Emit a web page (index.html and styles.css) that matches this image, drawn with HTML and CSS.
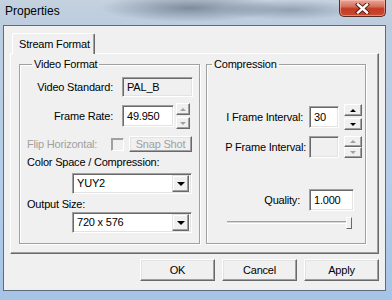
FILE: index.html
```html
<!DOCTYPE html>
<html lang="en">

<head>
     <meta charset="UTF-8">
     <title>Properties</title>
     <link rel="stylesheet" href="styles.css">
</head>

<body>
     <div class="window">
          <div class="titlebar">
               <span class="title">Properties</span>
               <span class="close">
                    <svg width="15" height="11" viewBox="0 0 15 11">
                         <path d="M3 1.5 L12 9.5 M12 1.5 L3 9.5" stroke="#4a1a14" stroke-width="4.2" stroke-linecap="square" />
                         <path d="M3 1.5 L12 9.5 M12 1.5 L3 9.5" stroke="#fff" stroke-width="2.4" stroke-linecap="square" />
                    </svg>
               </span>
          </div>

          <div class="client">
               <div class="tabs">
                    <div class="tab active">Stream Format</div>
               </div>

               <div class="panel">
                    <fieldset class="group video">
                         <legend>Video Format</legend>
                         <div class="row std">
                              <span class="lbl">Video Standard:</span>
                              <span class="field readonly">PAL_B</span>
                         </div>
                         <div class="row rate">
                              <span class="lbl">Frame Rate:</span>
                              <span class="field edit">49.950</span>
                              <span class="spin">
                                   <span class="sbtn up disabled"></span>
                                   <span class="sbtn down disabled"></span>
                              </span>
                         </div>
                         <div class="row flip">
                              <span class="lbl-left off">Flip Horizontal:</span>
                              <span class="check"></span>
                              <span class="btn small off">Snap Shot</span>
                         </div>
                         <div class="caption first">Color Space / Compression:</div>
                         <div class="combo first"><span class="value">YUY2</span><span class="drop"></span></div>
                         <div class="caption">Output Size:</div>
                         <div class="combo"><span class="value">720 x 576</span><span class="drop"></span></div>
                    </fieldset>

                    <fieldset class="group comp">
                         <legend>Compression</legend>
                         <div class="row iframe">
                              <span class="lbl">I Frame Interval:</span>
                              <span class="field edit">30</span>
                              <span class="spin">
                                   <span class="sbtn up"></span>
                                   <span class="sbtn down"></span>
                              </span>
                         </div>
                         <div class="row pframe">
                              <span class="lbl">P Frame Interval:</span>
                              <span class="field readonly"></span>
                              <span class="spin">
                                   <span class="sbtn up disabled"></span>
                                   <span class="sbtn down disabled"></span>
                              </span>
                         </div>
                         <div class="row quality">
                              <span class="lbl">Quality:</span>
                              <span class="field edit">1.000</span>
                         </div>
                         <div class="slider">
                              <span class="track"></span>
                              <span class="thumb"></span>
                         </div>
                    </fieldset>
               </div>

               <div class="buttons">
                    <span class="btn">OK</span>
                    <span class="btn">Cancel</span>
                    <span class="btn">Apply</span>
               </div>
          </div>
     </div>
</body>

</html>
```

FILE: styles.css
```css
:root {
     --FONT-FAMILY: 'Liberation Sans', Arial, sans-serif;
     --FACE-color: #f0f0f0;
     --LIGHT-color: #ffffff;
     --SHADOW-color: #a0a0a0;
     --DARK-color: #696969;
     --DISABLED-color: #a0a0a0;
}

/** Généralités **/
* {
     margin: 0;
     padding: 0;
}

*,
*::before,
*::after {
     box-sizing: border-box;
}

body {
     font-family: var(--FONT-FAMILY);
     font-size: 11px;
     line-height: 13px;
     letter-spacing: -0.2px;
     color: #000;
     background: #a9c6e8;
}

/** fenêtre **/
.window {
     width: 392px;
     height: 300px;
     display: flex;
     flex-direction: column;
     padding: 0 6px 9px 3px;
     background:
          radial-gradient(ellipse 90px 14px at 190px 8px, rgba(70, 85, 105, .55), transparent),
          radial-gradient(ellipse 70px 10px at 290px 10px, rgba(90, 105, 125, .45), transparent),
          linear-gradient(to bottom, #c4d1de 0, #bccddf 25px, #b4cde9 60%, #a6c4e6 100%);
}

.titlebar {
     height: 25px;
     display: flex;
     align-items: flex-start;
     flex-shrink: 0;
}

.title {
     padding: 4px 0 0 2px;
     font-size: 12px;
     line-height: 15px;
     letter-spacing: 0;
     color: #000;
}

.close {
     margin-left: auto;
     width: 47px;
     height: 17px;
     display: flex;
     align-items: center;
     justify-content: center;
     border: 1px solid #5a2a25;
     border-top: 0;
     border-radius: 0 0 5px 5px;
     background: linear-gradient(to bottom, #e9a79b 0, #d6705d 40%, #c23b22 55%, #c94a30 100%);
     box-shadow: inset 0 0 0 1px rgba(255, 200, 190, .5);
}

/** zone client **/
.client {
     flex: 1;
     display: flex;
     flex-direction: column;
     padding: 7px 7px 0 6px;
     background: var(--FACE-color);
     border: 1px solid #5d6b7a;
}

.tabs {
     display: flex;
     padding-left: 2px;
     position: relative;
     z-index: 1;
     margin-bottom: -1px;
}

.tab {
     width: 83px;
     height: 21px;
     padding: 4px 0 0 6px;
     background: var(--FACE-color);
     border-top: 1px solid var(--LIGHT-color);
     border-left: 1px solid var(--LIGHT-color);
     border-right: 1px solid var(--DARK-color);
     border-radius: 2px 2px 0 0;
     box-shadow: inset -1px 0 var(--SHADOW-color);
}

.panel {
     width: 369px;
     height: 201px;
     display: flex;
     gap: 6px;
     padding: 4px 8px 9px 8px;
     border-top: 1px solid var(--LIGHT-color);
     border-left: 1px solid var(--LIGHT-color);
     border-right: 1px solid var(--DARK-color);
     border-bottom: 1px solid var(--DARK-color);
     box-shadow: inset -1px -1px var(--SHADOW-color);
}

/** cadres de groupe **/
.group {
     min-width: 0;
     border: 1px solid var(--SHADOW-color);
     box-shadow: inset 1px 1px var(--LIGHT-color), 1px 1px var(--LIGHT-color);
     padding: 0 0 0 7px;
}

.group legend {
     margin-left: 5px;
     padding: 0 2px;
}

.video {
     width: 181px;
}

.comp {
     width: 160px;
     padding-left: 0;
}

.row {
     display: flex;
     align-items: center;
}

.lbl {
     width: 86px;
     text-align: right;
     margin-right: 9px;
     flex-shrink: 0;
}

.lbl-left {
     width: 84px;
     flex-shrink: 0;
}

.off {
     color: var(--DISABLED-color);
}

/** champs **/
.field {
     display: flex;
     align-items: center;
     padding-left: 4px;
     border-top: 1px solid var(--SHADOW-color);
     border-left: 1px solid var(--SHADOW-color);
     border-right: 1px solid var(--LIGHT-color);
     border-bottom: 1px solid var(--LIGHT-color);
     box-shadow: inset 1px 1px var(--DARK-color), inset -1px -1px #e3e3e3;
}

.field.edit {
     background: #fff;
}

.field.readonly {
     background: var(--FACE-color);
}

.std {
     margin-top: 6px;
}

.std .field {
     width: 71px;
     height: 20px;
}

.rate {
     margin-top: 6px;
     height: 26px;
}

.rate .field {
     width: 52px;
     height: 22px;
}

.spin {
     display: flex;
     flex-direction: column;
     gap: 2px;
     margin-left: 2px;
}

.sbtn {
     width: 14px;
     height: 12px;
     display: flex;
     align-items: center;
     justify-content: center;
     background: var(--FACE-color);
     border-top: 1px solid var(--LIGHT-color);
     border-left: 1px solid var(--LIGHT-color);
     border-right: 1px solid var(--DARK-color);
     border-bottom: 1px solid var(--DARK-color);
     box-shadow: inset -1px -1px var(--SHADOW-color);
}

.sbtn::after {
     content: "";
     border-left: 3px solid transparent;
     border-right: 3px solid transparent;
}

.sbtn.up::after {
     border-bottom: 3px solid #000;
}

.sbtn.down::after {
     border-top: 3px solid #000;
}

.sbtn.disabled.up::after {
     border-bottom-color: var(--DISABLED-color);
}

.sbtn.disabled.down::after {
     border-top-color: var(--DISABLED-color);
}

.flip {
     margin-top: 7px;
     height: 16px;
}

.check {
     width: 13px;
     height: 13px;
     border-top: 1px solid var(--SHADOW-color);
     border-left: 1px solid var(--SHADOW-color);
     border-right: 1px solid var(--LIGHT-color);
     border-bottom: 1px solid var(--LIGHT-color);
     box-shadow: inset 1px 1px var(--SHADOW-color);
     margin-right: 5px;
}

/** boutons **/
.btn {
     display: flex;
     align-items: center;
     justify-content: center;
     width: 75px;
     height: 22px;
     background: var(--FACE-color);
     border-top: 1px solid var(--LIGHT-color);
     border-left: 1px solid var(--LIGHT-color);
     border-right: 1px solid var(--DARK-color);
     border-bottom: 1px solid var(--DARK-color);
     box-shadow: inset -1px -1px var(--SHADOW-color), inset 1px 1px #e3e3e3;
}

.btn.small {
     width: 63px;
     height: 16px;
}

.caption {
     margin-top: 4px;
}

.combo {
     margin: 4px 0 0 45px;
     width: 120px;
     height: 21px;
     display: flex;
     align-items: center;
     padding: 2px 2px 2px 4px;
     background: #fff;
     border-top: 1px solid var(--SHADOW-color);
     border-left: 1px solid var(--SHADOW-color);
     border-right: 1px solid var(--LIGHT-color);
     border-bottom: 1px solid var(--LIGHT-color);
     box-shadow: inset 1px 1px var(--DARK-color), inset -1px -1px #e3e3e3;
}

.combo + .caption {
     margin-top: 4px;
}

.caption + .combo:not(.first) {
     margin-top: 1px;
}

.combo .value {
     flex: 1;
}

.drop {
     width: 17px;
     height: 17px;
     display: flex;
     align-items: center;
     justify-content: center;
     background: var(--FACE-color);
     border-top: 1px solid #e3e3e3;
     border-left: 1px solid #e3e3e3;
     border-right: 1px solid var(--DARK-color);
     border-bottom: 1px solid var(--DARK-color);
     box-shadow: inset -1px -1px var(--SHADOW-color), inset 1px 1px var(--LIGHT-color);
}

.drop::after {
     content: "";
     border-left: 4px solid transparent;
     border-right: 4px solid transparent;
     border-top: 4px solid #000;
}

/** compression **/
.comp .lbl {
     width: 96px;
     margin-right: 6px;
}

.comp .spin {
     margin-left: 5px;
}

.comp .sbtn {
     width: 18px;
}

.iframe {
     margin-top: 33px;
     height: 26px;
}

.iframe .field,
.pframe .field {
     width: 30px;
     height: 22px;
}

.pframe {
     margin-top: 6px;
}

.pframe .lbl {
     width: 99px;
     margin-right: 3px;
}

.pframe .sbtn {
     height: 11px;
}

.pframe .spin {
     gap: 0;
}

.quality {
     margin-top: 31px;
}

.quality .lbl {
     width: 93px;
     margin-right: 9px;
}

.quality .field {
     width: 45px;
     height: 22px;
}

.slider {
     margin: 5px 0 0 20px;
     width: 125px;
     height: 13px;
     display: flex;
     align-items: center;
}

.track {
     flex: 1;
     height: 3px;
     border-top: 1px solid var(--SHADOW-color);
     border-bottom: 1px solid var(--LIGHT-color);
     background: #d8d8d8;
}

.thumb {
     width: 6px;
     height: 12px;
     margin-left: -4px;
     background: var(--FACE-color);
     border-top: 1px solid var(--LIGHT-color);
     border-left: 1px solid var(--LIGHT-color);
     border-right: 1px solid var(--DARK-color);
     border-bottom: 1px solid var(--DARK-color);
}

/** barre de boutons **/
.buttons {
     display: flex;
     justify-content: flex-end;
     gap: 7px;
     width: 369px;
     margin-top: 5px;
}
```
